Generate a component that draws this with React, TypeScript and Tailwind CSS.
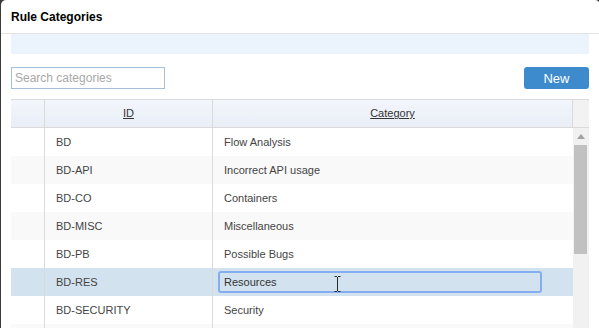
import React from "react";

type Row = { id: string; category: string };

const rows: Row[] = [
  { id: "BD", category: "Flow Analysis" },
  { id: "BD-API", category: "Incorrect API usage" },
  { id: "BD-CO", category: "Containers" },
  { id: "BD-MISC", category: "Miscellaneous" },
  { id: "BD-PB", category: "Possible Bugs" },
  { id: "BD-RES", category: "Resources" },
  { id: "BD-SECURITY", category: "Security" },
  { id: "", category: "" },
];

const EDITING = 5;

export default function App() {
  return (
    <div className="w-[599px] h-[328px] overflow-hidden bg-[#3b3b3b]">
      <div className="ml-[1px] w-[599px] h-full bg-white rounded-t-[5px] font-['Liberation_Sans',Arial,sans-serif]">
        {/* Title */}
        <div className="h-[34px] border-b border-[#e3e3e3] pl-[10px] flex items-center text-[12px] font-bold text-black">
          Rule Categories
        </div>

        <div className="pl-[10px] pr-[11px]">
          {/* info strip */}
          <div className="h-[20px] bg-[#ebf4fd]" />

          {/* toolbar */}
          <div className="mt-[13px] flex items-center justify-between">
            <input
              type="text"
              placeholder="Search categories"
              className="w-[154px] h-[22px] border border-[#a6bed9] px-[3px] text-[12px] text-[#333] placeholder-[#a8a8a8] outline-none"
            />
            <button className="w-[65px] h-[22px] rounded-[3px] bg-[#3d8bcd] text-white text-[13px] leading-none">
              New
            </button>
          </div>

          {/* Table */}
          <div className="mt-[10px]">
            <div className="flex h-[29px] border-t border-b border-[#dadada] text-[11px] text-[#333]">
              <div className="w-[34px] border-r border-[#dadada] bg-gradient-to-b from-[#f3f6fb] to-[#e9eef7]" />
              <div className="w-[168px] border-r border-[#dadada] bg-gradient-to-b from-[#f3f6fb] to-[#e9eef7] flex items-center justify-center">
                <span className="underline">ID</span>
              </div>
              <div className="w-[360px] border-r border-[#dadada] bg-gradient-to-b from-[#f3f6fb] to-[#e9eef7] flex items-center justify-center">
                <span className="underline">Category</span>
              </div>
              <div className="flex-1 bg-[#f2f2f2]" />
            </div>

            <div className="flex">
              <div className="w-[562px]">
                {rows.map((r, i) => {
                  const bg =
                    i === EDITING ? "bg-[#d3e2ef]" : i % 2 === 1 ? "bg-[#f9f9f9]" : "bg-white";
                  return (
                    <div key={i} className={`flex h-[28px] text-[11px] text-[#444] ${bg}`}>
                      <div className="w-[34px] border-r border-[#dadada]" />
                      <div className="w-[168px] border-r border-[#dadada] pl-[11px] flex items-center">
                        {r.id}
                      </div>
                      <div className="flex-1 flex items-center relative">
                        {i === EDITING ? (
                          <>
                            <div className="ml-[5px] w-[324px] h-[22px] border-2 border-[#84aef0] rounded-[3px] pl-[4px] flex items-center text-[#333]">
                              {r.category}
                            </div>
                            <svg
                              className="absolute left-[121px] top-[8px]"
                              width="7"
                              height="16"
                              viewBox="0 0 7 16"
                            >
                              <path
                                d="M0.5 0.5h2.5M4 0.5h2.5M3.5 1v14M0.5 15.5h2.5M4 15.5h2.5"
                                stroke="#2a2a2a"
                                strokeWidth="1"
                                fill="none"
                              />
                            </svg>
                          </>
                        ) : (
                          <span className="pl-[11px]">{r.category}</span>
                        )}
                      </div>
                    </div>
                  );
                })}
              </div>
              {/* scrollbar */}
              <div className="w-[16px] bg-[#f1f1f1] relative h-[200px]">
                <svg className="absolute left-[4px] top-[6px]" width="8" height="5" viewBox="0 0 8 5">
                  <path d="M4 0L8 5H0z" fill="#a3a3a3" />
                </svg>
                <div className="absolute left-[1px] top-[17px] w-[13px] h-[109px] bg-[#c1c1c1]" />
              </div>
            </div>
          </div>
        </div>
      </div>
    </div>
  );
}
